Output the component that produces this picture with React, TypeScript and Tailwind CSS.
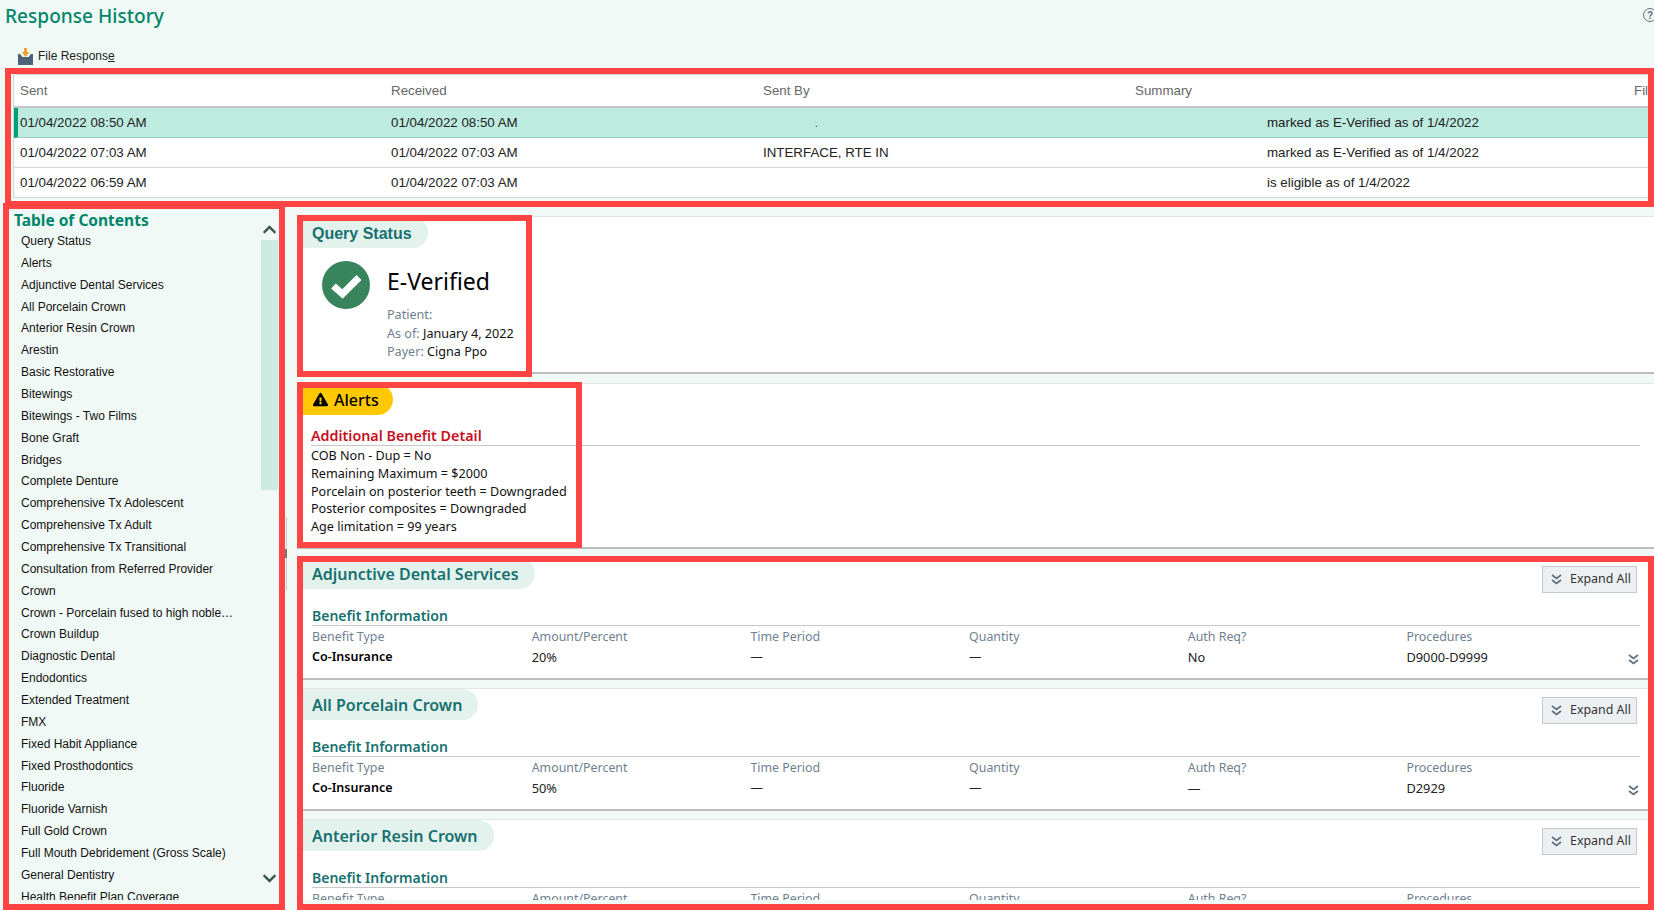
import { FaChevronDown, FaChevronUp, FaExclamationTriangle } from "react-icons/fa";

const tocItems = [
  "Query Status",
  "Alerts",
  "Adjunctive Dental Services",
  "All Porcelain Crown",
  "Anterior Resin Crown",
  "Arestin",
  "Basic Restorative",
  "Bitewings",
  "Bitewings - Two Films",
  "Bone Graft",
  "Bridges",
  "Complete Denture",
  "Comprehensive Tx Adolescent",
  "Comprehensive Tx Adult",
  "Comprehensive Tx Transitional",
  "Consultation from Referred Provider",
  "Crown",
  "Crown - Porcelain fused to high noble…",
  "Crown Buildup",
  "Diagnostic Dental",
  "Endodontics",
  "Extended Treatment",
  "FMX",
  "Fixed Habit Appliance",
  "Fixed Prosthodontics",
  "Fluoride",
  "Fluoride Varnish",
  "Full Gold Crown",
  "Full Mouth Debridement (Gross Scale)",
  "General Dentistry",
  "Health Benefit Plan Coverage",
];

const rows = [
  { sent: "01/04/2022 08:50 AM", received: "01/04/2022 08:50 AM", by: "", summary: "marked as E-Verified as of 1/4/2022", active: true },
  { sent: "01/04/2022 07:03 AM", received: "01/04/2022 07:03 AM", by: "INTERFACE, RTE IN", summary: "marked as E-Verified as of 1/4/2022", active: false },
  { sent: "01/04/2022 06:59 AM", received: "01/04/2022 07:03 AM", by: "", summary: "is eligible as of 1/4/2022", active: false },
];

const sections = [
  { name: "Adjunctive Dental Services", amount: "20%", auth: "No", procs: "D9000-D9999" },
  { name: "All Porcelain Crown", amount: "50%", auth: "—", procs: "D2929" },
  { name: "Anterior Resin Crown", amount: "", auth: "", procs: "" },
];

const alertLines = [
  "COB Non - Dup = No",
  "Remaining Maximum = $2000",
  "Porcelain on posterior teeth = Downgraded",
  "Posterior composites = Downgraded",
  "Age limitation = 99 years",
];

const FileIcon = () => (
  <svg width="15" height="17" viewBox="0 0 15 17">
    <path d="M0 6l2 0 2.500 3h6L13 6h2v11H0z" fill="#4d6378" />
    <path d="M6 0h3v4h2.500L7.500 9l-4-5H6z" fill="#f2a233" />
  </svg>
);

const DoubleChevron = ({ className }: { className: string }) => (
  <svg width="11" height="11" viewBox="0 0 11 11" fill="none" stroke="#5d6f80" strokeWidth="1.700" className={className}>
    <path d="M1 1l4.500 3.500L10 1" />
    <path d="M1 6l4.500 3.500L10 6" />
  </svg>
);

const VerifiedIcon = () => (
  <svg width="48" height="48" viewBox="0 0 48 48" className="shrink-0">
    <circle cx="24" cy="24" r="24" fill="#38845c" />
    <path d="M11.500 25l9 8L37 16.500" fill="none" stroke="white" strokeWidth="7" />
  </svg>
);

const RedBox = ({ className }: { className: string }) => (
  <div className={"absolute border-[6px] border-[#ff4444] pointer-events-none " + className} />
);

const SectionTab = ({ title }: { title: string }) => (
  <div className="inline-block h-[31px] rounded-r-[16px] bg-[#e4f2ee] pl-[15px] pr-[16px] pt-[2px] text-[16px] leading-[29px] font-semibold text-[#17716f]">
    {title}
  </div>
);

const BenefitSection = ({ s }: { s: (typeof sections)[number] }) => (
  <section className="relative h-[123px] shrink-0 border-t border-[#e2e6e5] border-b-2 border-b-[#bdbdbd] bg-white">
    <SectionTab title={s.name} />
    <button className="absolute right-[17px] top-[8px] flex h-[27px] w-[95px] items-center gap-[8px] border border-[#c3cbd0] bg-[#edf0f3] pl-[8px] text-[12.400px] text-[#333]">
      <DoubleChevron className="shrink-0" />
      Expand All
    </button>
    <div className="ml-[15px] mr-[14px] mt-[18px] border-b border-[#c8c8c8] text-[14px] leading-[18px] font-semibold text-[#17716f]">
      Benefit Information
    </div>
    <div className="ml-[15px] mr-[15px] grid grid-cols-[219.700px_218.700px_218.700px_218.700px_218.700px_1fr] text-[12.400px] leading-[20px]">
      {["Benefit Type", "Amount/Percent", "Time Period", "Quantity", "Auth Req?", "Procedures"].map((h) => (
        <div key={h} className="pt-[1px] text-[#6f7f8f]">
          {h}
        </div>
      ))}
      {s.procs && (
        <>
          <div className="text-[12.500px] font-semibold text-black">Co-Insurance</div>
          <div className="text-[12.800px]">{s.amount}</div>
          <div>—</div>
          <div>—</div>
          <div className="text-[12.800px]">{s.auth}</div>
          <div className="flex justify-between text-[12.800px]">
            {s.procs}
            <DoubleChevron className="mt-[7px]" />
          </div>
        </>
      )}
    </div>
  </section>
);

export default function App() {
  return (
    <div className="relative h-[910px] w-[1654px] overflow-hidden bg-[#f1f9f6] font-['Liberation_Sans',sans-serif] text-[12px] text-[#222]">
      <header className="flex h-[44px] items-start justify-between pl-[5px] pt-[1px]">
        <h1 className="font-['Noto_Sans',sans-serif] text-[19.100px] leading-[30px] font-medium text-[#00856a]">Response History</h1>
        <div className="-mr-[3px] mt-[7px] flex h-[14px] w-[14px] items-center justify-center rounded-full border border-[#5d6f80] text-[10px] font-bold text-[#5d6f80]">
          ?
        </div>
      </header>

      <div className="flex h-[24px] items-center gap-[5px] pl-[18px]">
        <FileIcon />
        <span>
          File Respons<span className="underline">e</span>
        </span>
      </div>

      <div className="ml-[13px] mt-[6px] w-[1641px] border-x border-t border-[#cfd6d4] bg-white text-[13.330px]">
        <div className="grid h-[33px] grid-cols-[371px_372px_372px_499px_1fr] items-center border-b-2 border-[#c4cac8] pl-[6px] text-[#666]">
          <span>Sent</span>
          <span>Received</span>
          <span>Sent By</span>
          <span>Summary</span>
          <span>File</span>
        </div>
        {rows.map((r) => (
          <div
            key={r.sent}
            className={
              r.active
                ? "grid h-[30px] grid-cols-[371px_372px_372px_1fr] items-center border-b border-[#98cfc0] border-l-[4px] border-l-[#00a078] bg-[#bdebe0] pl-[2px]"
                : "grid h-[30px] grid-cols-[371px_372px_372px_1fr] items-center border-b border-[#d0d6d4] pl-[6px]"
            }
          >
            <span>{r.sent}</span>
            <span>{r.received}</span>
            <span>{r.active ? <span className="pl-[52px] text-[10px]">.</span> : r.by}</span>
            <span className="pl-[132px]">{r.summary}</span>
          </div>
        ))}
      </div>

      <div className="mt-[11px] flex h-[691px] overflow-hidden">
        <aside className="relative h-full w-[278px] shrink-0 overflow-hidden">
          <h2 className="pl-[14px] pt-[1px] font-['Noto_Sans',sans-serif] text-[15.500px] leading-[20px] font-bold text-[#00856a]">
            Table of Contents
          </h2>
          <ul className="pl-[21px] pt-[1px]">
            {tocItems.map((t) => (
              <li key={t} className="h-[21.870px] whitespace-nowrap leading-[21.870px] text-[#111]">
                {t}
              </li>
            ))}
          </ul>
          <div className="absolute right-0 top-[31px] h-[250px] w-[17px] bg-[#cdeae1]" />
          <FaChevronUp className="absolute right-[1px] top-[13px] text-[15px] text-[#38584c]" />
          <FaChevronDown className="absolute right-[1px] top-[662px] text-[15px] text-[#38584c]" />
        </aside>

        <div className="relative w-[19px] shrink-0">
          <div className="absolute left-[8px] top-[308px] h-[73px] w-[1px] bg-[#c8cccb]" />
          <div className="absolute left-[7px] top-[340px] h-[9px] w-[2px] bg-[#777]" />
        </div>

        <main className="flex min-w-0 flex-1 flex-col pt-[7px]">
          <section className="h-[158px] shrink-0 border-t border-[#e2e6e5] border-b-2 border-b-[#bdbdbd] bg-white">
            <SectionTab title="Query Status" />
            <div className="flex pl-[25px] pt-[13px]">
              <VerifiedIcon />
              <div className="ml-[17px] pt-[3px] font-['Noto_Sans',sans-serif] text-[12.600px] leading-[18.500px]">
                <div className="mb-[8px] text-[23px] leading-[34px] text-black">E-Verified</div>
                <div className="text-[#6f7f8f]">Patient:</div>
                <div className="text-[#6f7f8f]">
                  As of: <span className="text-[#111]">January 4, 2022</span>
                </div>
                <div className="text-[#6f7f8f]">
                  Payer: <span className="text-[#111]">Cigna Ppo</span>
                </div>
              </div>
            </div>
          </section>

          <section className="mt-[9px] h-[166px] shrink-0 border-t border-[#e2e6e5] border-b-2 border-b-[#bdbdbd] bg-white">
            <div className="inline-flex h-[31px] items-center gap-[6px] rounded-r-[16px] bg-[#ffc800] pl-[16px] pr-[14px] font-['Noto_Sans',sans-serif] text-[16px] font-medium text-black">
              <FaExclamationTriangle className="text-[15px]" />
              Alerts
            </div>
            <div className="ml-[14px] mr-[14px] mt-[12px] border-b border-[#c8c8c8] font-['Noto_Sans',sans-serif] text-[14.300px] leading-[18px] font-semibold text-[#c8101e]">
              Additional Benefit Detail
            </div>
            <div className="ml-[14px] pt-[1px] font-['Noto_Sans',sans-serif] text-[12.600px] leading-[17.750px] text-[#111]">
              {alertLines.map((l) => (
                <div key={l}>{l}</div>
              ))}
            </div>
          </section>

          <div className="mt-[8px] flex flex-col gap-[8px] font-['Noto_Sans',sans-serif]">
            {sections.map((s) => (
              <BenefitSection key={s.name} s={s} />
            ))}
          </div>
        </main>
      </div>

      <RedBox className="left-[5px] top-[68px] h-[139px] w-[1649px]" />
      <RedBox className="left-[3px] top-[203px] h-[707px] w-[282px]" />
      <RedBox className="left-[297px] top-[215px] h-[162px] w-[235px]" />
      <RedBox className="left-[297px] top-[382px] h-[166px] w-[285px]" />
      <RedBox className="left-[297px] top-[556px] h-[354px] w-[1357px]" />
    </div>
  );
}
